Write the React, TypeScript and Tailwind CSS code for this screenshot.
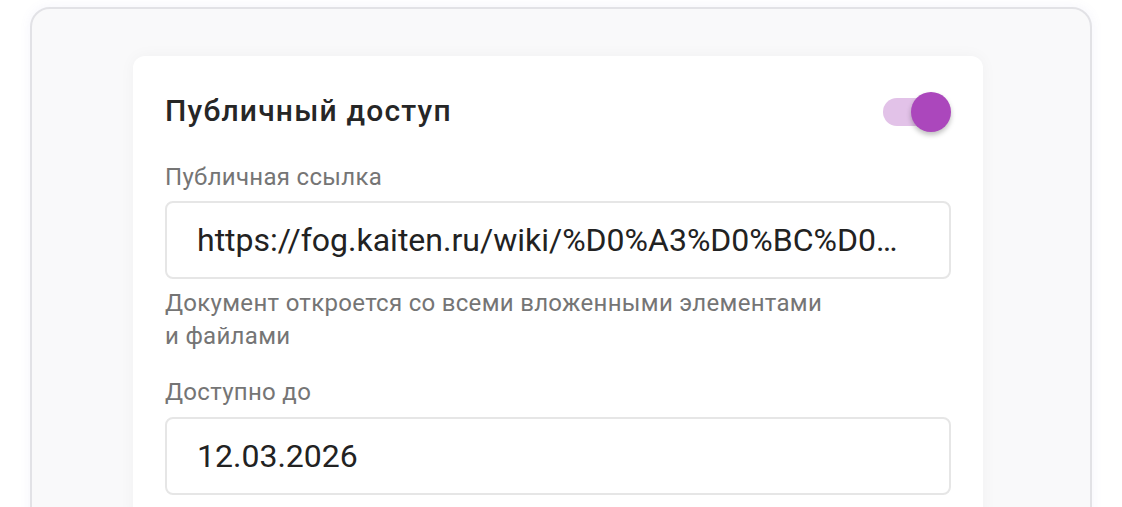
import React, { useState } from "react";

const App = () => {
  const [on, setOn] = useState(true);

  return (
    <div className="h-[507px] overflow-hidden bg-white pt-[7px] px-[30px] font-['Roboto',sans-serif]">
      <div className="h-[560px] rounded-[20px] border-2 border-[#e2e2e6] bg-[#f9f9fa] pt-[47px] pl-[101px] pr-[107px] shadow-[0_0_12px_rgba(110,110,200,0.08)]">
        <div className="rounded-[12px] bg-white px-[32px] pt-[35px] pb-8 shadow-[0_0_16px_rgba(0,0,0,0.04)]">
          <div className="flex h-[40px] items-center justify-between">
            <h2 className="text-[30px] font-medium leading-[40px] tracking-[1.2px] text-[#262626]">
              Публичный доступ
            </h2>
            <button
              onClick={() => setOn(!on)}
              className="relative mt-[2px] h-[40px] w-[68px]"
            >
              <span
                className={`absolute left-0 right-[6px] top-[6px] h-[28px] rounded-full ${
                  on ? "bg-[#e2c2e8]" : "bg-[#bdbdbd]"
                }`}
              />
              <span
                className={`absolute top-0 h-[40px] w-[40px] rounded-full shadow-[0_3px_5px_rgba(0,0,0,0.25)] ${
                  on ? "right-0 bg-[#ab47bc]" : "left-0 bg-white"
                }`}
              />
            </button>
          </div>

          <div className="mt-[30px] text-[24px] leading-[32px] tracking-[0.3px] text-[#757575]">
            Публичная ссылка
          </div>
          <div className="mt-[8px] flex h-[78px] items-center rounded-[8px] border-2 border-[#e6e6e6] pl-[30px] pr-[30px]">
            <span className="truncate text-[32px] text-[#222]">
              https://fog.kaiten.ru/wiki/%D0%A3%D0%BC%D0%BD%D1%8B%D0%B5
            </span>
          </div>
          <p className="mt-[8px] text-[24px] leading-[33px] tracking-[0.3px] text-[#757575]">
            Документ откроется со всеми вложенными элементами
            <br />и файлами
          </p>

          <div className="mt-[23px] text-[24px] leading-[32px] tracking-[0.3px] text-[#757575]">
            Доступно до
          </div>
          <div className="mt-[9px] flex h-[78px] items-center rounded-[8px] border-2 border-[#e6e6e6] pl-[30px]">
            <span className="text-[32px] text-[#222]">12.03.2026</span>
          </div>
        </div>
      </div>
    </div>
  );
};

export default App;
